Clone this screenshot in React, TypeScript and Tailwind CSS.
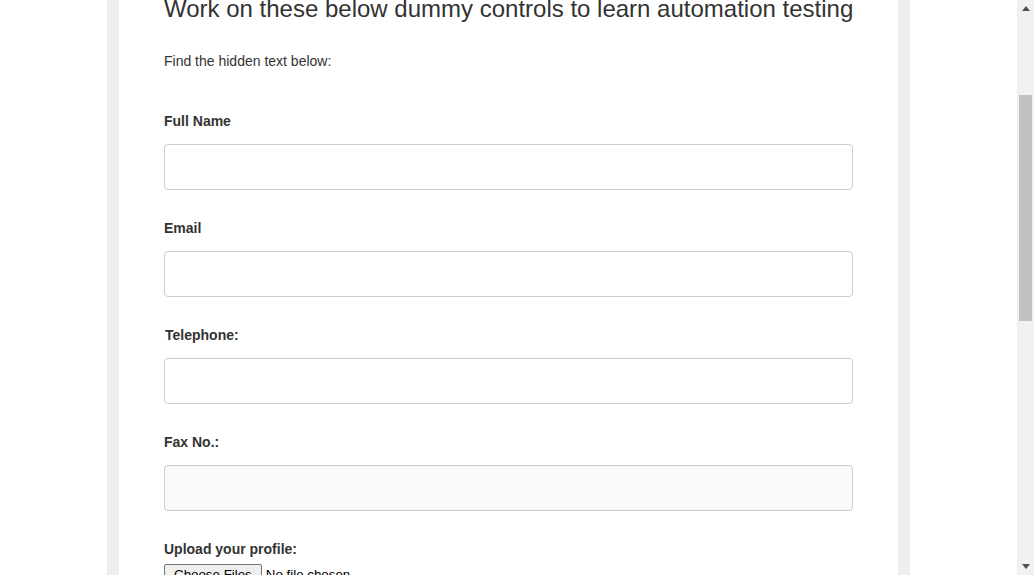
export default function App() {
  const fields = [
    { label: "Full Name", pad: false, disabled: false },
    { label: "Email", pad: false, disabled: false },
    { label: "Telephone:", pad: true, disabled: false },
    { label: "Fax No.:", pad: false, disabled: true },
  ];

  return (
    <div className="flex h-[575px] w-[1034px] overflow-hidden bg-white font-['Liberation_Sans',Arial,sans-serif] text-[#333]">
      <div className="h-full flex-1 overflow-hidden">
        <div className="mx-auto h-full w-[803px] bg-[#eee] px-3">
          <div className="flex h-full flex-col overflow-hidden bg-white px-[45px]">
            <h3 className="-mt-[4px] whitespace-nowrap text-[24px] leading-[1.1]">
              Work on these below dummy controls to learn automation testing
            </h3>
            <p className="mt-[29px] text-[14px] leading-5">Find the hidden text below:</p>

            <form className="mt-[40px]">
              {fields.map((f) => (
                <div key={f.label} className="mb-[28px]">
                  <label className={`block text-[14px] font-bold leading-5 ${f.pad ? "pl-px" : ""}`}>
                    {f.label}
                  </label>
                  <input
                    type="text"
                    className={`mt-[13px] block h-[46px] w-full rounded-[4px] border border-[#ccc] px-3 ${
                      f.disabled ? "bg-[#fafafa]" : "bg-white"
                    }`}
                  />
                </div>
              ))}

              <label className="block text-[14px] font-bold leading-5">Upload your profile:</label>
              <div className="mt-[5px] flex items-center text-[13.33px]">
                <span className="rounded-[2px] border border-[#767676] bg-[#efefef] px-[9px] py-px leading-[17px] text-black">
                  Choose Files
                </span>
                <span className="ml-[4px] text-black">No file chosen</span>
              </div>
            </form>
          </div>
        </div>
      </div>

      {/* fake scrollbar */}
      <div className="flex w-[17px] flex-col bg-[#f1f1f1]">
        <div className="flex h-[17px] items-center justify-center">
          <svg width="8" height="5" viewBox="0 0 8 5">
            <path d="M4 0 L8 5 L0 5 Z" fill="#505050" />
          </svg>
        </div>
        <div className="mx-[2px] mt-[78px] h-[226px] bg-[#c1c1c1]" />
        <div className="flex-1" />
        <div className="flex h-[17px] items-center justify-center">
          <svg width="8" height="5" viewBox="0 0 8 5">
            <path d="M0 0 L8 0 L4 5 Z" fill="#505050" />
          </svg>
        </div>
      </div>
    </div>
  );
}
